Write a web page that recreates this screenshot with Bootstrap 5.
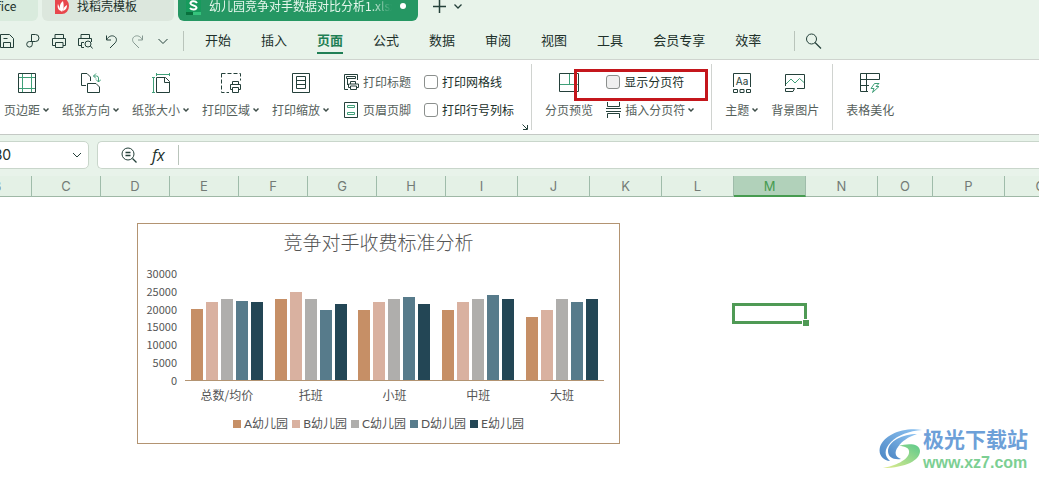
<!DOCTYPE html>
<html lang="zh-CN">
<head>
<meta charset="utf-8">
<meta name="viewport" content="width=device-width, initial-scale=1">
<title>幼儿园竞争对手数据对比分析1.xlsx</title>
<link href="https://cdn.jsdelivr.net/npm/bootstrap@5.3.0/dist/css/bootstrap.min.css" rel="stylesheet">
<style>
:root { --ink:#24403a; --leaf:#3f9f78; --shell:#e8f3ea; --rule:#d0d3d0; }
body { font-family:"Noto Sans CJK SC",sans-serif; font-size:13px; line-height:18px; color:#20302a; background:#fff; overflow:hidden; min-height:100vh; }
svg { display:block; fill:none; stroke:var(--ink); stroke-width:1; flex:none; }
svg .leaf { stroke:var(--leaf); }
button { border:0; background:none; padding:0; color:inherit; }
.shell { background:var(--shell); }
.doc-tabs { height:22px; gap:4px; font-size:12px; }
.doc-tab { height:31px; margin-top:-10px; border-radius:6px; background:#dce7dd; white-space:nowrap; }
.doc-tab svg { stroke:none; }
.tab-home { width:38px; background:#d9ebdd; border-radius:0 6px 6px 0; overflow:hidden; }
.tab-home span { margin-left:-16px; }
.tab-find { width:132px; padding-left:13px; }
.tab-book { width:240px; padding:0 12px 0 8px; background:#259763; color:#e6f7ec; }
.tab-name { overflow:hidden; flex:1; -webkit-mask-image:linear-gradient(90deg,#000 88%,transparent); mask-image:linear-gradient(90deg,#000 88%,transparent); }
.unsaved { width:6px; height:6px; border-radius:50%; background:#fff; }
.menu-row { height:38px; border-bottom:1px solid #cfd4cf; }
.quick { gap:10px; margin:0 12px 0 -1px; }
.bar-rule { width:1px; height:20px; background:#b9c4bb; }
.menu-links { gap:30px; margin-left:21px; margin-right:33px; }
.menu-links a { color:#20302a; text-decoration:none; white-space:nowrap; padding:4px 0 3px; border-bottom:2px solid transparent; }
.menu-links a.active { color:#1f7f55; font-weight:700; border-color:#1f7f55; }
.ribbon { padding:4px 0; border-bottom:1px solid #c4c9c5; font-size:12px; color:#55605b; white-space:nowrap; }
.tool-group { position:relative; display:flex; gap:13px; height:66px; padding:8px 17px 0 13px; border-right:1px solid var(--rule); }
.tool-group:first-child { padding-left:4px; }
.tool-group + .tool-group + .tool-group { padding-right:13px; }
.tool-group:last-child { border:0; }
.tool { display:flex; flex-direction:column; align-items:center; gap:7px; }
.tool-name { display:flex; align-items:center; gap:3px; }
.tool-stack { display:flex; flex-direction:column; gap:10px; padding-top:1px; margin-left:2px; }
.tool-line { display:flex; align-items:center; gap:4px; height:18px; }
.tool-line label { color:#20302a; }
.tool-line .form-check-input { width:14px; height:14px; margin:0; border:1px solid #8b8f8d; border-radius:3px; flex:none; }
.tool-line .muted-box { background:#efefef; }
.launcher { position:absolute; right:3px; bottom:0; }
.callout { position:absolute; left:42px; right:3px; top:5px; height:32px; border:3px solid #c4161c; pointer-events:none; }
.formula-row { padding:6px 0 7px; gap:8px; }
.field { height:28px; background:#fff; border:1px solid #c9d6cb; border-radius:5px; }
.field input { border:0; outline:0; background:none; padding:0; min-width:0; color:#20302a; }
.name-field { width:149px; margin-left:-60px; padding:0 6px 0 40px; }
.name-field input { font:14px/20px Inter,sans-serif; width:80px; }
.fx-field { border-right:0; border-radius:5px 0 0 5px; padding-left:23px; }
.fx-mark { font:italic 16px/20px "Open Sans",sans-serif; margin:0 13px 0 15px; }
.sheet-cols { display:grid; grid-template-columns:repeat(7,69px) 72px 72px 72px 72px 72px 72px 55px 72px 72px minmax(72px,1fr); margin-left:-37px; }
.col-heads { height:21px; background:#e4f1e6; border-bottom:1px solid #9fb8a6; font:13px/20px Inter,sans-serif; color:#737b76; text-align:center; }
.col-heads div { border-right:1px solid #9fbcaa; }
.col-heads .picked { background:#b1d1ba; color:#469b50; border-bottom:2px solid #469b50; height:21px; }
.sheet { position:relative; min-height:283px; }
.cells { grid-auto-rows:21px; }
.cell-picked { grid-area:6/12; position:relative; margin:2px 0 0 -1px; outline:3px solid #4f9a55; outline-offset:-2px; }
.cell-picked::after { content:""; position:absolute; right:-3px; bottom:-3px; width:6px; height:6px; background:#4f9a55; outline:1px solid #fff; }
.chart-box { position:absolute; left:137px; top:26px; width:483px; height:221px; border:1px solid #b39472; background:#fff; color:#555; font-size:12px; }
.chart-title { font-size:19px; line-height:24px; font-weight:300; padding-top:6px; color:#555; }
.plot { margin:19px 15px 0 0; }
.axis-y { width:39px; height:107px; font-size:11px; line-height:0; text-align:right; }
.axis-y span { height:0; }
.bars { height:108px; margin-left:8px; border-bottom:1px solid #b39472; }
.bar-set { flex:1; gap:3px; }
.bar-set i { width:12px; }
.s1 { background:#c68f66; } .s2 { background:#d9b1a0; } .s3 { background:#afaeac; } .s4 { background:#577b8b; } .s5 { background:#234655; }
.axis-x { margin:5px 15px 0 47px; text-align:center; }
.axis-x span { flex:1; }
.keys { gap:4px; margin-top:11px; font-family:Lato,"Noto Sans CJK SC",sans-serif; }
.keys span { display:flex; align-items:center; gap:3px; }
.keys i { width:8px; height:8px; }
.site-mark { position:absolute; right:11px; bottom:8px; color:#6da0d8; text-decoration:none; white-space:nowrap; }
.site-mark svg { stroke:none; }
.site-name { font-size:21px; line-height:24px; font-weight:700; margin-bottom:4px; }
.site-url { font:bold 16px/18px "Liberation Sans",sans-serif; color:#7ccf93; }
</style>
</head>
<body>
<svg class="d-none" width="0" height="0"><defs>
<symbol id="chev" viewBox="0 0 6 6"><path d="M.5 1.500 3 4 5.500 1.500" stroke="#3d4d48" stroke-width="1.500"/></symbol>
</defs></svg>

<header class="shell">
  <div class="doc-tabs d-flex overflow-hidden">
    <div class="doc-tab tab-home d-flex align-items-center"><span>Office</span></div>
    <div class="doc-tab tab-find d-flex align-items-center gap-2">
      <svg width="14" height="16" viewBox="0 0 14 16"><path d="M0 0h7a7 8 0 0 1 0 16H0z" fill="#e8474d"/><path d="M7 14C4 11 4 6 8 3c1 4 1 8-1 11zM6 13C3 12 2 9 3 6M8 13c3-1 4-3 4-6-2 1-4 3-4 6z" fill="#fff"/></svg>
      <span>找稻壳模板</span>
    </div>
    <div class="doc-tab tab-book d-flex align-items-center gap-2">
      <svg width="15" height="18" viewBox="0 0 15 18"><path d="M0 0h15v17H0z" fill="#169a5c"/><path d="M0 15h7v3H0z" fill="#08713d"/><path d="M7 15h8v3H7z" fill="#35c37c"/><path d="M11 6C9 3 4 4 4.500 6.500 5 9 10 8 10.500 10.500 10.500 13 5.500 13 4 11" fill="none" stroke="#fff" stroke-width="2"/></svg>
      <span class="tab-name">幼儿园竞争对手数据对比分析1.xlsx</span>
      <span class="unsaved"></span>
    </div>
    <button class="ms-2 align-self-start" aria-label="新建"><svg width="18" height="14" viewBox="0 0 18 14"><path d="M9.500 0v13M3 6.500h13" stroke-width="1.500"/></svg></button>
    <button class="align-self-start" aria-label="标签列表"><svg width="12" height="12" viewBox="0 0 12 12"><path d="M2.500 4.500 6 8l3.500-3.500" stroke-width="1.300"/></svg></button>
  </div>
  <div class="menu-row d-flex align-items-center">
    <div class="quick d-flex">
      <button aria-label="保存"><svg width="16" height="16" viewBox="0 0 16 16"><path d="M1.500 1.500h9l4 4v9h-13zM4.500 14v-4.500h7V14M4.500 5.500h4"/></svg></button>
      <button aria-label="输出"><svg width="16" height="16" viewBox="0 0 16 16"><path d="M6.500 8.500v-7h4a3.500 3.500 0 0 1 0 7h-6a2.800 2.800 0 1 0 2.800 2.800V8.500"/></svg></button>
      <button aria-label="打印"><svg width="16" height="16" viewBox="0 0 16 16"><path d="M4 5.500v-4h8.500v4M4 12.500H1.500v-7h13v7H12M4.500 9.500h7.500v5H4.500z"/></svg></button>
      <button aria-label="打印预览"><svg width="16" height="16" viewBox="0 0 16 16"><path d="M4 5.500v-4h8.500v4M4 12.500H1.500v-7h13V9M7 14.500H4.500v-5H7M13.500 13l2 2.500"/><circle cx="11" cy="11" r="3"/></svg></button>
      <button aria-label="撤销"><svg width="16" height="16" viewBox="0 0 16 16"><path d="M3.500 2.500v4.500H8M3.500 7C5.500 3 9 2 11.500 3.500S14 8 12 10l-5 5"/></svg></button>
      <button aria-label="恢复"><svg width="16" height="16" viewBox="0 0 16 16" opacity=".5"><path d="M13.500 2.500v4.500H9M13.500 7C11.500 3 8 2 5.500 3.500S3 8 5 10l5 5"/></svg></button>
      <button aria-label="更多"><svg width="16" height="16" viewBox="0 0 16 16"><path d="M3.500 6 8 10.500 12.500 6"/></svg></button>
    </div>
    <span class="bar-rule" role="separator"></span>
    <nav class="menu-links d-flex">
      <a href="#">开始</a><a href="#">插入</a><a href="#" class="active">页面</a><a href="#">公式</a><a href="#">数据</a><a href="#">审阅</a><a href="#">视图</a><a href="#">工具</a><a href="#">会员专享</a><a href="#">效率</a>
    </nav>
    <span class="bar-rule" role="separator"></span>
    <button class="ms-2" aria-label="搜索"><svg width="20" height="16" viewBox="0 0 20 16"><circle cx="8.500" cy="6" r="5"/><path d="m12 9.500 6 6" stroke-width="1.300"/></svg></button>
  </div>
</header>

<div class="ribbon d-flex">
  <div class="tool-group">
    <button class="tool"><svg width="20" height="22" viewBox="0 0 20 22"><path d="M1.500 1.500h17v19h-17z"/><path class="leaf" d="M5.500 2v18M14.500 2v18M2 5.500h16M2 16.500h16"/></svg><span class="tool-name">页边距<svg width="6" height="6"><use href="#chev"/></svg></span></button>
    <button class="tool"><svg width="20" height="22" viewBox="0 0 20 22"><path d="M5 13.500H.500v-12H6l3.500 3.500V9M6.500 11.500H15l3.500 3.500v5.500h-12z"/><path class="leaf" d="M15 1.500 12.500 4 15 6.500M12.500 4h3q2 0 2 2v4M15 7.500l2.500 2.500L20 7.500"/></svg><span class="tool-name">纸张方向<svg width="6" height="6"><use href="#chev"/></svg></span></button>
    <button class="tool"><svg width="20" height="22" viewBox="0 0 20 22"><path d="M5.500 5.500h9l4 4v11h-13zM13.500 6v4.500H18"/><path class="leaf" d="M5 2.500h14M5.500 1v3M18.500 1v3M2.500 5v15M1 5.500h3M1 20.500h3"/></svg><span class="tool-name">纸张大小<svg width="6" height="6"><use href="#chev"/></svg></span></button>
    <button class="tool"><svg width="20" height="22" viewBox="0 0 20 22"><path d="M.500 1.500h19v7M.500 1.500v19H8" stroke-dasharray="4 2"/><path d="M11.500 12.500v-3h6v3M11.500 17.500h-2v-5h10v5h-2M11.500 15.500h6v5h-6z"/></svg><span class="tool-name">打印区域<svg width="6" height="6"><use href="#chev"/></svg></span></button>
    <button class="tool"><svg width="20" height="22" viewBox="0 0 20 22"><path d="M1.500 1.500h17v19h-17zM5.500 4.500h9v12h-9zM5.500 8.500h9M5.500 12.500h9"/></svg><span class="tool-name">打印缩放<svg width="6" height="6"><use href="#chev"/></svg></span></button>
    <div class="tool-stack">
      <button class="tool-line"><svg width="15" height="16" viewBox="0 0 15 16"><path d="M4 15.500H.500V.500h13V6M2.500 2.500h9v2h-9zM3.500 5v6M6.500 10V7.500h5V10M6.500 13.500h-2V10h10v3.500h-2M6.500 12h6v3.500h-6z"/></svg>打印标题</button>
      <button class="tool-line"><svg width="15" height="16" viewBox="0 0 15 16"><path d="M.500.500h13v15H.500z"/><path class="leaf" d="M3.500 3.500h7v2h-7zM3.500 10.500h7v2h-7z"/></svg>页眉页脚</button>
    </div>
    <div class="tool-stack ms-0">
      <div class="tool-line"><input class="form-check-input" type="checkbox" id="grid"><label for="grid">打印网格线</label></div>
      <div class="tool-line"><input class="form-check-input" type="checkbox" id="heads"><label for="heads">打印行号列标</label></div>
    </div>
    <button class="launcher" aria-label="页面设置"><svg width="6" height="6" viewBox="0 0 6 6"><path d="M.500.500 5 5M5.500 1v4.500H1"/></svg></button>
  </div>
  <div class="tool-group">
    <button class="tool"><svg width="20" height="22" viewBox="0 0 20 22"><path d="M.500 1.500h19v18H.500z"/><path class="leaf" d="M1 12.500h18M10.500 2v10"/></svg>分页预览</button>
    <div class="tool-stack ms-0">
      <div class="tool-line"><input class="form-check-input muted-box" type="checkbox" id="breaks"><label for="breaks">显示分页符</label></div>
      <button class="tool-line"><svg width="15" height="16" viewBox="0 0 15 16"><path d="M1.500 0v4.500h12V0M0 6.500h15M0 9.500h15M1.500 16v-4.500h12V16"/></svg><span class="tool-name">插入分页符<svg width="6" height="6"><use href="#chev"/></svg></span></button>
    </div>
    <div class="callout"></div>
  </div>
  <div class="tool-group">
    <button class="tool"><svg width="20" height="22" viewBox="0 0 20 22"><path d="M1.500 15V1.500h17V15M1.500 17.500h4v3h-4zM8 17.500h4v3H8zM14.500 17.500h4v3h-4z"/><text x="10" y="13" text-anchor="middle" font-family="Inter" font-size="10" fill="#24403a" stroke="none">Aa</text></svg><span class="tool-name">主题<svg width="6" height="6"><use href="#chev"/></svg></span></button>
    <button class="tool"><svg width="20" height="22" viewBox="0 0 20 22"><path d="M.500 14V2.500h19v14H12M.500 16.500h9l-1.500 3H.500z"/><path class="leaf" d="m1 12 5-5 4 4 4.500-4.500 4.500 4"/></svg>背景图片</button>
  </div>
  <div class="tool-group">
    <button class="tool"><svg width="20" height="22" viewBox="0 0 20 22"><path d="M8 19.500H.500v-18h19v6H.500M6.500 1.500v18M.500 13.500H9"/><path class="leaf" d="m14.500 11.500-3.500 5h3l-1.500 4 6.500-6h-3l3-3z"/></svg>表格美化</button>
  </div>
</div>

<div class="shell formula-row d-flex">
  <div class="field name-field d-flex align-items-center">
    <input type="text" value="M30" aria-label="名称框">
    <svg class="ms-auto" width="10" height="10" viewBox="0 0 10 10"><path d="m1 3 4 4 4-4"/></svg>
  </div>
  <div class="field fx-field d-flex align-items-center flex-grow-1">
    <button aria-label="缩放"><svg width="16" height="16" viewBox="0 0 16 16"><circle cx="7" cy="7" r="6"/><path d="m11.500 11.500 4 4M4.500 5.500h5M4.500 8.500h5" stroke-width="1.300"/></svg></button>
    <span class="fx-mark">fx</span>
    <span class="bar-rule"></span>
    <input class="flex-grow-1 ms-2" type="text" aria-label="编辑栏">
  </div>
</div>

<main class="overflow-hidden">
  <div class="sheet-cols col-heads">
    <div>B</div><div>C</div><div>D</div><div>E</div><div>F</div><div>G</div><div>H</div><div>I</div><div>J</div><div>K</div><div>L</div><div class="picked">M</div><div>N</div><div>O</div><div>P</div><div>Q</div>
  </div>
  <div class="sheet">
    <div class="sheet-cols cells"><div class="cell-picked"></div></div>
    <section class="chart-box">
      <div class="chart-title text-center">竞争对手收费标准分析</div>
      <div class="plot d-flex">
        <div class="axis-y d-flex flex-column justify-content-between"><span>30000</span><span>25000</span><span>20000</span><span>15000</span><span>10000</span><span>5000</span><span>0</span></div>
        <div class="bars d-flex flex-grow-1">
          <div class="bar-set d-flex align-items-end justify-content-center"><i class="s1" style="height:66%"></i><i class="s2" style="height:73%"></i><i class="s3" style="height:76%"></i><i class="s4" style="height:74%"></i><i class="s5" style="height:73%"></i></div>
          <div class="bar-set d-flex align-items-end justify-content-center"><i class="s1" style="height:76%"></i><i class="s2" style="height:82%"></i><i class="s3" style="height:76%"></i><i class="s4" style="height:65%"></i><i class="s5" style="height:71%"></i></div>
          <div class="bar-set d-flex align-items-end justify-content-center"><i class="s1" style="height:65%"></i><i class="s2" style="height:73%"></i><i class="s3" style="height:76%"></i><i class="s4" style="height:78%"></i><i class="s5" style="height:71%"></i></div>
          <div class="bar-set d-flex align-items-end justify-content-center"><i class="s1" style="height:65%"></i><i class="s2" style="height:73%"></i><i class="s3" style="height:76%"></i><i class="s4" style="height:79%"></i><i class="s5" style="height:76%"></i></div>
          <div class="bar-set d-flex align-items-end justify-content-center"><i class="s1" style="height:59%"></i><i class="s2" style="height:65%"></i><i class="s3" style="height:76%"></i><i class="s4" style="height:73%"></i><i class="s5" style="height:76%"></i></div>
        </div>
      </div>
      <div class="axis-x d-flex"><span>总数/均价</span><span>托班</span><span>小班</span><span>中班</span><span>大班</span></div>
      <div class="keys d-flex justify-content-center"><span><i class="s1"></i>A幼儿园</span><span><i class="s2"></i>B幼儿园</span><span><i class="s3"></i>C幼儿园</span><span><i class="s4"></i>D幼儿园</span><span><i class="s5"></i>E幼儿园</span></div>
    </section>
    <a class="site-mark d-flex align-items-center" href="#">
      <svg width="44" height="42" viewBox="0 0 44 42">
        <defs>
          <linearGradient id="sky" x1="1" y1="0" x2="0" y2="1"><stop offset="0" stop-color="#8fc4f2"/><stop offset="1" stop-color="#4b86c4"/></linearGradient>
          <linearGradient id="grass" x1="1" y1="0" x2="0" y2="1"><stop offset="0" stop-color="#5cc98b"/><stop offset="1" stop-color="#e2ec8e"/></linearGradient>
        </defs>
        <path d="M43 2C24-1 5 7 1 19c-2 8 3 13 10 14C5 28 5 21 12 14 19 7 30 3 43 2z" fill="url(#sky)"/>
        <path d="M38 6C24 6 9 13 9 23c0 6 5 9 13 8-6-2-7-7-3-12C23 13 29 9 38 6z" fill="url(#sky)"/>
        <path d="M20 18c8-3 21-3 21 5 0 9-14 17-37 17 12-2 25-8 26-15 1-5-4-7-10-7z" fill="url(#grass)"/>
      </svg>
      <span class="d-flex flex-column"><span class="site-name">极光下载站</span><span class="site-url">www.xz7.com</span></span>
    </a>
  </div>
</main>
<script src="https://cdn.jsdelivr.net/npm/bootstrap@5.3.0/dist/js/bootstrap.bundle.min.js"></script>
</body>
</html>
